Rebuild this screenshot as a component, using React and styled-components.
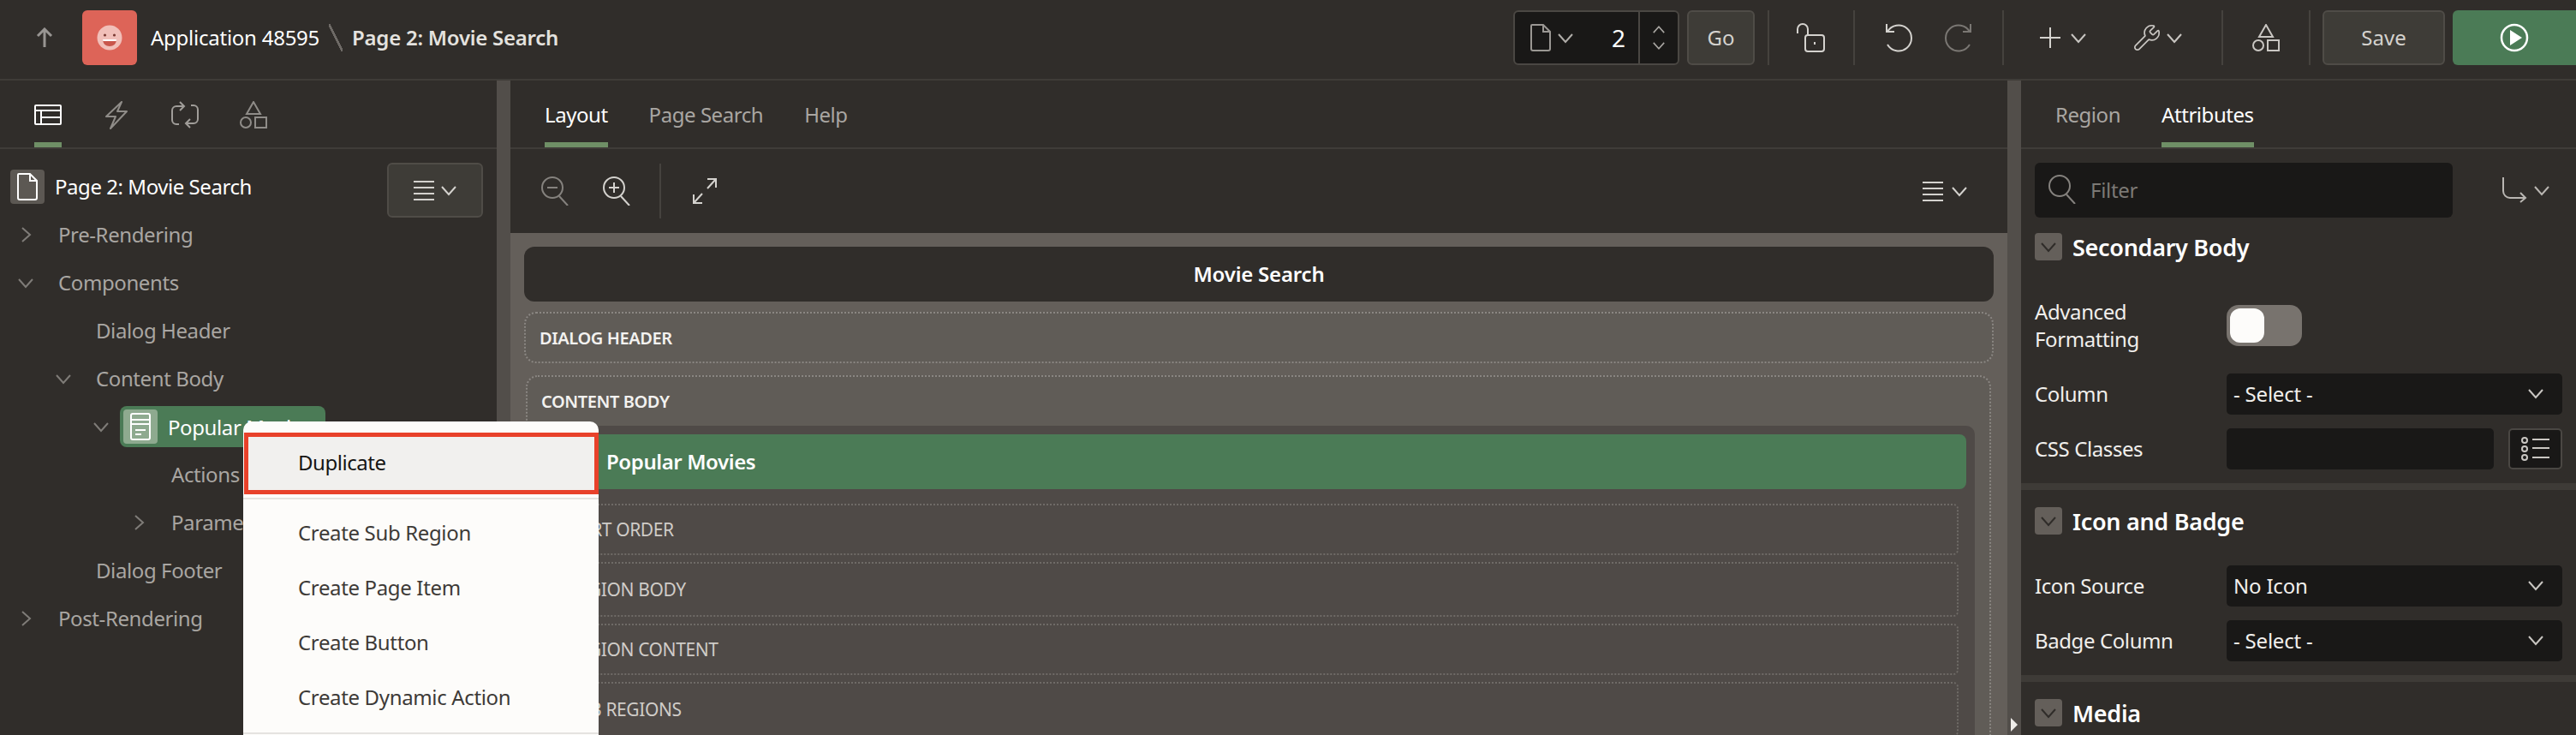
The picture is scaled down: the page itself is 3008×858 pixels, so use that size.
import React from 'react';
import styled, { createGlobalStyle } from 'styled-components';
import { Wrench } from 'lucide-react';

const Global = createGlobalStyle`
  html, body { margin: 0; padding: 0; background: #302d2a; }
  body { width: 3008px; height: 858px; overflow: hidden; font-family: "Noto Sans", "Open Sans", sans-serif; }
  * { box-sizing: border-box; }
`;

const Shell = styled.div`
  position: relative; width: 3008px; height: 858px; overflow: hidden;
  background: #302d2a; color: #fff; font-size: 24px; display: flex; flex-direction: column;
`;

/* ---------- top bar ---------- */
const TopBar = styled.header`
  height: 94px; flex: none; display: flex; align-items: center; padding-bottom: 4px;
  border-bottom: 2px solid #3f3c38;
`;
const BackSlot = styled.div`width: 96px; display: flex; justify-content: center; padding-left: 8px;`;
const AppLogo = styled.div`
  width: 64px; height: 64px; border-radius: 6px; background: #dd6458;
  display: flex; align-items: center; justify-content: center; margin-right: 16px;
`;
const Crumb = styled.span`
  font-size: 24px; letter-spacing: -0.25px; color: ${p => (p.$strong ? '#e4e2df' : '#fff')};
  font-weight: ${p => (p.$strong ? 600 : 400)}; white-space: nowrap; padding-bottom: 2px;
`;
const CrumbSep = styled.span`
  width: 16px; height: 32px; margin: 0 11px; display: block;
  background: linear-gradient(to top right, transparent 46%, #6e6a66 46%, #6e6a66 54%, transparent 54%);
`;
const ToolGroup = styled.div`margin-left: auto; display: flex; align-items: center; height: 64px;`;
const PageBox = styled.div`
  width: 194px; height: 64px; background: #191817; border: 2px solid #4a4743; border-radius: 6px;
  display: flex; align-items: stretch; margin-right: 9px;
`;
const PageBoxMain = styled.div`
  width: 144px; display: flex; align-items: center; padding-left: 18px; gap: 8px; position: relative;
`;
const PageNumber = styled.span`margin-left: auto; padding-right: 15px; font-size: 28px; color: #fff; font-weight: 400;`;
const Stepper = styled.div`
  flex: 1; border-left: 2px solid #4a4743; display: flex; flex-direction: column;
  align-items: center; justify-content: space-between; padding: 14px 0;
`;
const DarkButton = styled.div`
  width: ${p => p.$w}px; height: 64px; background: #3e3c37; border: 2px solid #4f4c47; border-radius: 6px;
  display: flex; align-items: center; justify-content: center; color: #d4d2ce; padding-bottom: 2px;
  font-size: ${p => p.$fs || 24}px; margin-left: ${p => p.$ml || 0}px; flex: none;
`;
const RunButton = styled.div`
  width: 144px; height: 64px; margin-left: 9px; background: #4b7b56; border-radius: 6px 0 0 6px;
  display: flex; align-items: center; justify-content: center;
`;
const Sep = styled.div`
  width: 2px; height: ${p => p.$h || 64}px; background: #45423e; flex: none;
  margin: 0 ${p => p.$mr || 0}px 0 ${p => p.$ml || 0}px;
`;
const ToolIcon = styled.div`
  width: ${p => p.$w}px; height: 64px; flex: none; display: flex; align-items: center; justify-content: center;
`;
const ToolCombo = styled.div`
  display: flex; align-items: center; gap: ${p => p.$gap}px; margin-left: ${p => p.$ml}px; flex: none;
`;

/* ---------- main ---------- */
const Main = styled.main`flex: 1; display: flex; min-height: 0;`;
const Splitter = styled.div`
  width: 16px; flex: none; background: #524e4a; position: relative;
`;
const SplitGrip = styled.span`
  position: absolute; left: 4px; bottom: 4px; width: 0; height: 0;
  border-left: 8px solid #eeece9; border-top: 8px solid transparent; border-bottom: 8px solid transparent;
`;
const Column = styled.section`
  width: ${p => (p.$w ? `${p.$w}px` : 'auto')}; flex: ${p => (p.$w ? 'none' : 1)};
  display: flex; flex-direction: column; min-width: 0; overflow: hidden;
`;
const TabRow = styled.nav`
  height: 80px; flex: none; display: flex; gap: ${p => p.$gap || 48}px; padding-left: 40px;
  border-bottom: 2px solid #3f3c38;
`;
const Tab = styled.div`
  height: 78px; border-bottom: 6px solid ${p => (p.$active ? '#6f8f66' : 'transparent')};
  padding-top: 6px; display: flex; align-items: center; letter-spacing: -0.45px;
  color: ${p => (p.$active ? '#fff' : '#a9a6a2')}; white-space: nowrap;
`;
const IconTab = styled(Tab)`
  width: 32px; justify-content: center; align-items: flex-start; padding-top: ${p => p.$top || 24}px;
`;

/* ---------- tree ---------- */
const PageRow = styled.div`
  height: 56px; margin-top: 16px; flex: none; display: flex; padding-left: 12px; align-items: flex-start;
`;
const PageBadge = styled.div`
  width: 40px; height: 40px; margin-top: 8px; border-radius: 4px; background: #5c5853;
  display: flex; align-items: center; justify-content: center; margin-right: 12px;
`;
const PageTitle = styled.span`margin-top: 12px; letter-spacing: -0.45px; line-height: 32px;`;
const MenuButton = styled(DarkButton)`margin-left: auto; margin-right: 16px; gap: 8px; padding-bottom: 0;`;
const TreeRow = styled.div`
  height: 56px; flex: none; display: flex; align-items: center; padding-left: ${p => 8 + p.$depth * 44}px;
  color: #a9a6a2; letter-spacing: -0.4px; white-space: nowrap;
`;
const Twisty = styled.span`width: 44px; flex: none; display: flex; justify-content: center;`;
const TreeLabel = styled.span`margin-left: 16px; padding-bottom: 2px;`;
const TreePill = styled.div`
  width: 240px; height: 48px; background: #4b7b56; border-radius: 8px; padding-left: 4px;
  display: flex; align-items: center; color: #fff;
`;
const PillBadge = styled.div`
  width: 40px; height: 40px; background: #8eaa8f; border-radius: 4px; margin-right: 12px;
  display: flex; align-items: center; justify-content: center;
`;

/* ---------- context menu ---------- */
const ContextMenu = styled.div`
  position: absolute; left: 284px; top: 492px; width: 415px; height: 366px; z-index: 5;
  background: #fdfcfa; border-radius: 10px 10px 0 0; padding-top: 13px; overflow: hidden;
`;
const MenuHot = styled.div`
  height: 72px; background: #f1f0ee; border: 5px solid #e8412a; padding: 0 0 3px 58px;
  display: flex; align-items: center; color: #161513; letter-spacing: -0.45px; margin-left: 1px;
`;
const MenuDivider = styled.div`height: 2px; background: #e5e3e0; margin: ${p => p.$t}px 0 ${p => p.$b}px;`;
const MenuItem = styled.div`
  height: 64px; padding: 0 0 3px 64px; display: flex; align-items: center; color: #3d3a37; letter-spacing: -0.35px;
`;

/* ---------- canvas ---------- */
const LayoutToolbar = styled.div`
  height: 98px; flex: none; display: flex; align-items: center; position: relative; padding-left: 17px;
`;
const MenuTrigger = styled.div`margin-left: auto; margin-right: 47px; display: flex; align-items: center; gap: 10px;`;
const Canvas = styled.div`
  flex: 1; min-height: 0; background: #645f5a; padding: 16px 16px 0; overflow: hidden;
`;
const CanvasTitle = styled.div`
  height: 64px; background: #302d2a; border-radius: 12px; display: flex; align-items: center; justify-content: center;
  font-weight: 600; font-size: 24px; letter-spacing: -0.2px; margin-bottom: 12px; padding-bottom: 2px;
`;
const Zone = styled.div`
  border: 2px dotted ${p => (p.$inner ? '#6f6b67' : '#8a8682')}; border-radius: ${p => (p.$inner ? '6px' : '14px')};
  background: ${p => (p.$inner ? 'transparent' : 'rgba(0,0,0,.03)')};
`;
const HeaderZone = styled(Zone)`
  height: 60px; display: flex; align-items: center; padding-left: 16px; margin-bottom: 14px;
`;
const BodyZone = styled(Zone)`
  margin: 0 3px 0 2px; height: 500px;
`;
const ZoneLabel = styled.div`
  font-size: ${p => (p.$inner ? 21 : 20)}px; font-weight: ${p => (p.$inner ? 400 : 600)}; letter-spacing: -0.4px;
  color: ${p => (p.$inner ? '#cfccc8' : '#f3f2f0')};
`;
const BodyLabel = styled(ZoneLabel)`height: 57px; padding: 14px 0 0 16px; line-height: 30px;`;
const RegionWrap = styled.div`
  margin: 0 17px; background: #4f4a47; border-radius: 10px 10px 0 0; padding: 10px 10px 0; height: 500px;
`;
const RegionBar = styled.div`
  height: 64px; background: #4b7b56; border-radius: 8px; display: flex; align-items: center;
  padding: 0 0 2px 65px; font-weight: 600; letter-spacing: -0.4px; margin-bottom: 17px;
`;
const SubZone = styled(Zone)`
  height: ${p => p.$h}px; margin: 0 9px 8px 1px; display: flex; align-items: center; padding: 0 0 1px 17px;
`;

/* ---------- properties ---------- */
const PropBody = styled.div`padding: 16px 16px 0; display: flex; flex-direction: column;`;
const FilterRow = styled.div`display: flex; align-items: center; margin-bottom: 18px;`;
const FilterBox = styled.div`
  width: 488px; height: 64px; background: #191817; border-radius: 6px; display: flex; align-items: center;
  padding: 0 0 2px 16px; gap: 15px; color: #7c7975; letter-spacing: -0.3px;
`;
const GotoGroup = styled.div`margin-left: 57px; display: flex; align-items: center; gap: 8px;`;
const SectionHead = styled.div`
  display: flex; align-items: center; height: 32px; font-size: 27px; font-weight: 600; letter-spacing: -0.3px;
  margin-bottom: ${p => p.$mb || 36}px; white-space: nowrap;
`;
const Collapse = styled.span`
  width: 32px; height: 32px; background: #645f5a; border-radius: 4px; margin-right: 12px;
  display: flex; align-items: center; justify-content: center;
`;
const PropRow = styled.div`
  display: grid; grid-template-columns: 224px 1fr; align-items: center; margin-bottom: ${p => p.$mb ?? 16}px;
  min-height: 48px; color: #f1efec; letter-spacing: -0.4px;
`;
const PropLabel = styled.span`padding-bottom: 2px;`;
const TwoLine = styled.span`line-height: 32px;`;
const Toggle = styled.div`
  width: 88px; height: 48px; background: #78736e; border-radius: 14px; padding: 4px;
`;
const Knob = styled.div`width: 40px; height: 40px; background: #fdfcfa; border-radius: 12px;`;
const SelectBox = styled.div`
  height: 48px; background: #191817; border-radius: 5px; display: flex; align-items: center;
  padding: 0 22px 2px 8px; justify-content: space-between; color: #f1efec; letter-spacing: -0.2px;
`;
const InputWithButton = styled.div`display: flex; justify-content: space-between;`;
const TextField = styled.div`width: 312px; height: 48px; background: #191817; border-radius: 5px;`;
const ListButton = styled.div`
  width: 63px; height: 48px; background: #191817; border: 2px solid #4a4743; border-radius: 5px;
  display: flex; align-items: center; justify-content: center;
`;
const SectionRule = styled.div`
  height: 8px; background: #3e3b37; margin: 0 -16px 20px;
`;

/* ---------- icons ---------- */
const Chev = ({ dir = 'down', c = '#a9a6a2', w = 18, sw = 2 }) => {
  const r = { down: 0, right: -90, up: 180 }[dir];
  return (
    <svg width={w} height={w} viewBox="0 0 18 18" fill="none" style={{ transform: `rotate(${r}deg)` }}>
      <polyline points="1,5 9,14 17,5" stroke={c} strokeWidth={sw} />
    </svg>
  );
};
const UpArrow = () => (
  <svg width="20" height="24" viewBox="0 0 20 24" fill="none" stroke="#989592" strokeWidth="3">
    <path d="M10 23V3M2 10l8-8 8 8" />
  </svg>
);
const Smile = () => (
  <svg width="30" height="30" viewBox="0 0 30 30">
    <circle cx="15" cy="15" r="14.5" fill="#f1bfb9" />
    <circle cx="9.5" cy="12" r="1.6" fill="#7a3a33" />
    <circle cx="20.5" cy="12" r="1.6" fill="#7a3a33" />
    <path d="M7 17h16c0 5-3.5 8-8 8s-8-3-8-8z" fill="#c9564c" />
    <path d="M7 17h16l-.3 2H7.3z" fill="#fff" />
  </svg>
);
const DocIcon = ({ c, fill = 'none', w = 24, h = 32, sw = 2 }) => (
  <svg width={w} height={h} viewBox="0 0 24 32" fill={fill} stroke={c} strokeWidth={sw}>
    <path d="M2 1h13l8 8v20a2 2 0 0 1-2 2H3a2 2 0 0 1-2-2V2a1 1 0 0 1 1-1z" />
    <path d="M15 1v8h8" />
  </svg>
);
const LayoutIcon = () => (
  <svg width="32" height="24" viewBox="0 0 32 24" fill="none" stroke="#fff" strokeWidth="2">
    <rect x="1" y="1" width="30" height="22" rx="1" />
    <path d="M1 7h30M8 7v16M8 15h23" />
  </svg>
);
const BoltIcon = () => (
  <svg width="26" height="33" viewBox="0 0 26 33" fill="none" stroke="#8f8c88" strokeWidth="2" strokeLinejoin="round">
    <path d="M19 1L1 18h11L6 32l19-20H14z" />
  </svg>
);
const LoopIcon = () => (
  <svg width="32" height="32" viewBox="0 0 32 32" fill="none" stroke="#a09d99" strokeWidth="2">
    <path d="M15 6H6a5 5 0 0 0-5 5v11a5 5 0 0 0 5 5h3" />
    <path d="M10 1l5 5-5 5" />
    <path d="M17 26h9a5 5 0 0 0 5-5V10a5 5 0 0 0-5-5h-3" />
    <path d="M22 21l-5 5 5 5" />
  </svg>
);
const ShapesIcon = ({ c = '#8f8c88' }) => (
  <svg width="32" height="32" viewBox="0 0 32 32" fill="none" stroke={c} strokeWidth="2">
    <path d="M16 1l8 14H8z" />
    <circle cx="7" cy="25" r="6" />
    <rect x="18" y="19" width="13" height="12" />
  </svg>
);
const LinesIcon = ({ c = '#d4d2ce' }) => (
  <svg width="24" height="24" viewBox="0 0 24 24" stroke={c} strokeWidth="2">
    <path d="M0 2h24M0 9h24M0 16h24M0 23h24" />
  </svg>
);
const RegionIcon = () => (
  <svg width="24" height="32" viewBox="0 0 24 32" fill="none" stroke="#fff" strokeWidth="2">
    <rect x="1" y="1" width="22" height="30" rx="2" />
    <path d="M1 8h22M1 13h22M6 20h12M6 25h7" />
  </svg>
);
const LockIcon = () => (
  <svg width="34" height="34" viewBox="0 0 34 34" fill="none" stroke="#d4d2ce" strokeWidth="2">
    <rect x="10" y="14" width="22" height="19" rx="3" />
    <path d="M1 12V7a6 6 0 0 1 12 0v7" />
    <path d="M21 22v3" />
  </svg>
);
const UndoIcon = ({ c, flip }) => (
  <svg width="32" height="34" viewBox="0 0 32 34" fill="none" stroke={c} strokeWidth="2" style={flip ? { transform: 'scaleX(-1)' } : undefined}>
    <path d="M3 10A15 15 0 1 1 3 25" />
    <path d="M2 1v9h9" />
  </svg>
);
const PlusIcon = () => (
  <svg width="24" height="24" viewBox="0 0 24 24" stroke="#d4d2ce" strokeWidth="2"><path d="M12 0v24M0 12h24" /></svg>
);
const RunIcon = () => (
  <svg width="34" height="34" viewBox="0 0 34 34">
    <circle cx="17" cy="17" r="15" fill="none" stroke="#fff" strokeWidth="2.5" />
    <path d="M12 8l14 9-14 9z" fill="#fff" />
  </svg>
);
const Magnifier = ({ c, sign }) => (
  <svg width="34" height="34" viewBox="0 0 34 34" fill="none" stroke={c} strokeWidth="2">
    <circle cx="13" cy="13" r="12" />
    <path d="M21 23l10 11" />
    {sign && <path d="M7 13h12" />}
    {sign === 'plus' && <path d="M13 7v12" />}
  </svg>
);
const ExpandIcon = () => (
  <svg width="28" height="30" viewBox="0 0 28 30" fill="none" stroke="#d4d2ce" strokeWidth="2">
    <path d="M17 12L27 1M17 1h10v10M11 18L1 29M1 19v10h10" />
  </svg>
);
const GotoIcon = () => (
  <svg width="30" height="30" viewBox="0 0 30 30" fill="none" stroke="#b9b6b2" strokeWidth="2">
    <path d="M2 0v16a8 8 0 0 0 8 8h18M22 18l6 6-6 5" />
  </svg>
);
const ListIcon = () => (
  <svg width="34" height="28" viewBox="0 0 34 28" fill="none" stroke="#c9c6c2" strokeWidth="2">
    <circle cx="4" cy="4" r="3" /><circle cx="4" cy="14" r="3" /><circle cx="4" cy="24" r="3" />
    <path d="M13 3h20M13 13h20M13 24h20" />
  </svg>
);

const tree = [
  { d: 0, t: 'Pre-Rendering', c: 'right' },
  { d: 0, t: 'Components', c: 'down' },
  { d: 1, t: 'Dialog Header' },
  { d: 1, t: 'Content Body', c: 'down' },
  { d: 2, t: 'Popular Movies', c: 'down', pill: true },
  { d: 3, t: 'Actions' },
  { d: 3, t: 'Parameters', c: 'right' },
  { d: 1, t: 'Dialog Footer' },
  { d: 0, t: 'Post-Rendering', c: 'right' },
];

export default function App() {
  return (
    <Shell>
      <Global />
      <TopBar>
        <BackSlot><UpArrow /></BackSlot>
        <AppLogo><Smile /></AppLogo>
        <Crumb>Application 48595</Crumb>
        <CrumbSep />
        <Crumb $strong>Page 2: Movie Search</Crumb>
        <ToolGroup>
          <PageBox>
            <PageBoxMain>
              <DocIcon c="#9a9793" w={24} h={32} />
              <Chev c="#b0ada9" />
              <PageNumber>2</PageNumber>
            </PageBoxMain>
            <Stepper>
              <Chev dir="up" w={14} c="#a9a6a2" />
              <Chev w={14} c="#a9a6a2" />
            </Stepper>
          </PageBox>
          <DarkButton $w={79}>Go</DarkButton>
          <Sep $ml={15} />
          <ToolIcon $w={98}><LockIcon /></ToolIcon>
          <Sep $mr={16} />
          <ToolIcon $w={70}><UndoIcon c="#d4d2ce" /></ToolIcon>
          <ToolIcon $w={70}><UndoIcon c="#7a7773" flip /></ToolIcon>
          <Sep $ml={16} />
          <ToolCombo $gap={12} $ml={42}><PlusIcon /><Chev c="#c9c6c2" /></ToolCombo>
          <ToolCombo $gap={6} $ml={54}>
            <Wrench size={34} color="#c9c6c2" strokeWidth={1.2} />
            <Chev c="#c9c6c2" />
          </ToolCombo>
          <Sep $ml={46} />
          <ToolIcon $w={100}><ShapesIcon c="#c9c6c2" /></ToolIcon>
          <Sep $mr={14} />
          <DarkButton $w={143}>Save</DarkButton>
          <RunButton><RunIcon /></RunButton>
        </ToolGroup>
      </TopBar>

      <Main>
        <Column $w={580}>
          <TabRow>
            <IconTab $active $top={28}><LayoutIcon /></IconTab>
            <IconTab $top={24}><BoltIcon /></IconTab>
            <IconTab $top={24}><LoopIcon /></IconTab>
            <IconTab $top={24}><ShapesIcon /></IconTab>
          </TabRow>
          <PageRow>
            <PageBadge><DocIcon c="#fff" w={24} h={32} /></PageBadge>
            <PageTitle>Page 2: Movie Search</PageTitle>
            <MenuButton $w={112}><LinesIcon /><Chev c="#d4d2ce" /></MenuButton>
          </PageRow>
          {tree.map(n => (
            <TreeRow key={n.t} $depth={n.d}>
              <Twisty>{n.c && <Chev dir={n.c} c="#7f7c78" />}</Twisty>
              {n.pill ? (
                <TreePill>
                  <PillBadge><RegionIcon /></PillBadge>
                  {n.t}
                </TreePill>
              ) : (
                <TreeLabel>{n.t}</TreeLabel>
              )}
            </TreeRow>
          ))}
        </Column>
        <Splitter />
        <Column>
          <TabRow $gap={48}>
            <Tab $active>Layout</Tab>
            <Tab>Page Search</Tab>
            <Tab>Help</Tab>
          </TabRow>
          <LayoutToolbar>
            <ToolIcon $w={72}><Magnifier c="#85827e" sign="minus" /></ToolIcon>
            <ToolIcon $w={72}><Magnifier c="#d4d2ce" sign="plus" /></ToolIcon>
            <Sep $ml={13} />
            <ToolIcon $w={102}><ExpandIcon /></ToolIcon>
            <MenuTrigger><LinesIcon /><Chev c="#d4d2ce" /></MenuTrigger>
          </LayoutToolbar>
          <Canvas>
            <CanvasTitle>Movie Search</CanvasTitle>
            <HeaderZone><ZoneLabel>DIALOG HEADER</ZoneLabel></HeaderZone>
            <BodyZone>
              <BodyLabel>CONTENT BODY</BodyLabel>
              <RegionWrap>
                <RegionBar>Popular Movies</RegionBar>
                <SubZone $inner $h={60}><ZoneLabel $inner>SORT ORDER</ZoneLabel></SubZone>
                <SubZone $inner $h={64}><ZoneLabel $inner>REGION BODY</ZoneLabel></SubZone>
                <SubZone $inner $h={60}><ZoneLabel $inner>REGION CONTENT</ZoneLabel></SubZone>
                <SubZone $inner $h={64}><ZoneLabel $inner>SUB REGIONS</ZoneLabel></SubZone>
              </RegionWrap>
            </BodyZone>
          </Canvas>
        </Column>
        <Splitter><SplitGrip /></Splitter>
        <Column $w={648}>
          <TabRow>
            <Tab>Region</Tab>
            <Tab $active>Attributes</Tab>
          </TabRow>
          <PropBody>
            <FilterRow>
              <FilterBox>
                <Magnifier c="#85827e" />
                Filter
              </FilterBox>
              <GotoGroup><GotoIcon /><Chev c="#b9b6b2" /></GotoGroup>
            </FilterRow>
            <SectionHead $mb={44}><Collapse><Chev c="#2f2c29" /></Collapse>Secondary Body</SectionHead>
            <PropRow $mb={24}>
              <TwoLine>Advanced<br />Formatting</TwoLine>
              <Toggle><Knob /></Toggle>
            </PropRow>
            <PropRow>
              <PropLabel>Column</PropLabel>
              <SelectBox>- Select -<Chev c="#c9c6c2" /></SelectBox>
            </PropRow>
            <PropRow>
              <PropLabel>CSS Classes</PropLabel>
              <InputWithButton><TextField /><ListButton><ListIcon /></ListButton></InputWithButton>
            </PropRow>
            <SectionRule />
            <SectionHead><Collapse><Chev c="#2f2c29" /></Collapse>Icon and Badge</SectionHead>
            <PropRow>
              <PropLabel>Icon Source</PropLabel>
              <SelectBox>No Icon<Chev c="#c9c6c2" /></SelectBox>
            </PropRow>
            <PropRow>
              <PropLabel>Badge Column</PropLabel>
              <SelectBox>- Select -<Chev c="#c9c6c2" /></SelectBox>
            </PropRow>
            <SectionRule />
            <SectionHead><Collapse><Chev c="#2f2c29" /></Collapse>Media</SectionHead>
          </PropBody>
        </Column>
      </Main>

      <ContextMenu>
        <MenuHot>Duplicate</MenuHot>
        <MenuDivider $t={4} $b={8} />
        <MenuItem>Create Sub Region</MenuItem>
        <MenuItem>Create Page Item</MenuItem>
        <MenuItem>Create Button</MenuItem>
        <MenuItem>Create Dynamic Action</MenuItem>
        <MenuDivider $t={8} $b={0} />
      </ContextMenu>
    </Shell>
  );
}
